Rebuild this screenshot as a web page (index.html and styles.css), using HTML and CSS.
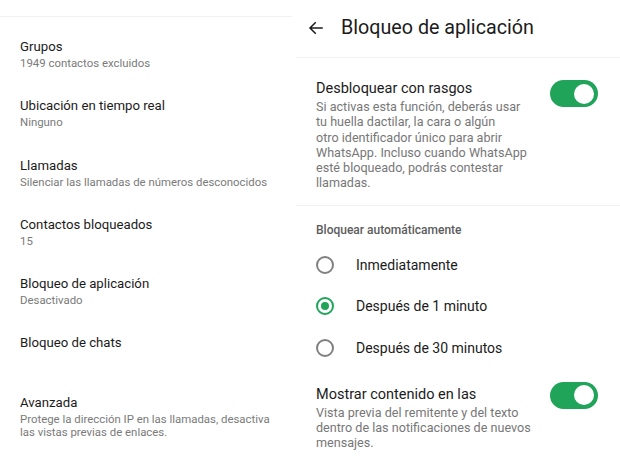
FILE: index.html
```html
<!DOCTYPE html>
<html lang="es">
  <head>
    <meta charset="UTF-8" />
    <meta name="viewport" content="width=device-width, initial-scale=1.0" />
    <title>Privacidad - Bloqueo de aplicación</title>
    <link rel="stylesheet" href="styles.css">
  </head>
  <body>
    <div class="screens">
      <!-- left: privacy list -->
      <div class="panel panel-list">
        <div class="top-gap"></div>
        <ul class="settings">
          <li class="item">
            <h3>Grupos</h3>
            <p>1949 contactos excluidos</p>
          </li>
          <li class="item">
            <h3>Ubicación en tiempo real</h3>
            <p>Ninguno</p>
          </li>
          <li class="item">
            <h3>Llamadas</h3>
            <p>Silenciar las llamadas de números desconocidos</p>
          </li>
          <li class="item">
            <h3>Contactos bloqueados</h3>
            <p>15</p>
          </li>
          <li class="item">
            <h3>Bloqueo de aplicación</h3>
            <p>Desactivado</p>
          </li>
          <li class="item">
            <h3>Bloqueo de chats</h3>
          </li>
          <li class="item">
            <h3>Avanzada</h3>
            <p>Protege la dirección IP en las llamadas, desactiva las vistas previas de enlaces.</p>
          </li>
        </ul>
      </div>

      <!-- right: app lock screen -->
      <div class="panel panel-lock">
        <header class="bar">
          <svg class="back" width="18" height="18" viewBox="0 0 24 24">
            <path d="M20 12H5M11 5l-7 7 7 7" fill="none" stroke="#1b1b1b" stroke-width="2" stroke-linecap="square" />
          </svg>
          <h1>Bloqueo de aplicación</h1>
        </header>

        <section class="option first">
          <div class="option-text">
            <h3>Desbloquear con rasgos</h3>
            <p>Si activas esta función, deberás usar tu huella dactilar, la cara o algún otro&nbsp;identificador único para abrir WhatsApp. Incluso cuando WhatsApp esté bloqueado, podrás contestar llamadas.</p>
          </div>
          <span class="switch on"></span>
        </section>

        <section class="auto">
          <h4>Bloquear automáticamente</h4>
          <label class="radio"><span class="dot"></span>Inmediatamente</label>
          <label class="radio"><span class="dot checked"></span>Después de 1 minuto</label>
          <label class="radio"><span class="dot"></span>Después de 30 minutos</label>
        </section>

        <section class="option last">
          <div class="option-text">
            <h3>Mostrar contenido en las</h3>
            <p>Vista previa del remitente y del texto dentro de las notificaciones de nuevos mensajes.</p>
          </div>
          <span class="switch on"></span>
        </section>
      </div>
    </div>
  </body>
</html>
```

FILE: styles.css
```css
* {
  margin: 0;
  padding: 0;
  box-sizing: border-box;
  font-family: Roboto, "Noto Sans", sans-serif;
}

body {
  background: #fff;
  color: #1b1b1b;
  width: 620px;
  height: 465px;
  overflow: hidden;
}

.screens {
  display: flex;
  gap: 4px;
}

.panel-list {
  width: 292px;
}

.top-gap {
  height: 17px;
  border-bottom: 1px solid #f1f1f1;
}

.settings {
  list-style: none;
  padding-top: 3px;
}

.item {
  height: 59.3px;
  padding: 18px 0 0 20px;
}

.item h3 {
  font-size: 13.2px;
  font-weight: 400;
  line-height: 17px;
}

.item p {
  font-size: 11.4px;
  line-height: 13.5px;
  color: #7a7a7a;
  margin-top: 2px;
  padding-right: 12px;
}

.panel-lock {
  flex: 1;
}

.bar {
  height: 58px;
  display: flex;
  align-items: center;
  gap: 16px;
  padding: 0 0 2px 11px;
  border-bottom: 1px solid #f1f1f1;
}

.back {
  display: block;
}

.bar h1 {
  font-size: 19.7px;
  font-weight: 400;
}

.option {
  display: flex;
  justify-content: space-between;
  padding: 22px 22px 0 20px;
}

.option.first {
  height: 148px;
  border-bottom: 1px solid #f1f1f1;
}

.option-text h3 {
  font-size: 14.5px;
  font-weight: 400;
  line-height: 18px;
}

.option-text p {
  font-size: 12.6px;
  line-height: 15.3px;
  color: #777;
  width: 213px;
  margin-top: 1px;
}

.option.last .option-text p {
  width: 225px;
}

.switch {
  position: relative;
  flex: none;
  width: 48px;
  height: 27px;
  border-radius: 14px;
  background: #ccc;
}

.switch.on {
  background: #1fa45a;
}

.switch::after {
  content: "";
  position: absolute;
  top: 3.5px;
  left: 4px;
  width: 20px;
  height: 20px;
  border-radius: 50%;
  background: #fff;
}

.switch.on::after {
  left: 24px;
}

.auto {
  padding: 16px 0 0 20px;
}

.auto h4 {
  font-size: 12px;
  font-weight: 500;
  color: #5c5c5c;
  line-height: 16px;
  margin-bottom: 6px;
}

.radio {
  display: flex;
  align-items: center;
  gap: 22px;
  height: 41.5px;
  font-size: 14px;
}

.dot {
  width: 18px;
  height: 18px;
  border-radius: 50%;
  border: 2px solid #808080;
  display: flex;
  align-items: center;
  justify-content: center;
}

.dot.checked {
  border-color: #1fa45a;
}

.dot.checked::after {
  content: "";
  width: 8px;
  height: 8px;
  border-radius: 50%;
  background: #1fa45a;
}

.option.last {
  padding-top: 17px;
}

.option.last .switch {
  margin-top: -4px;
}
```
